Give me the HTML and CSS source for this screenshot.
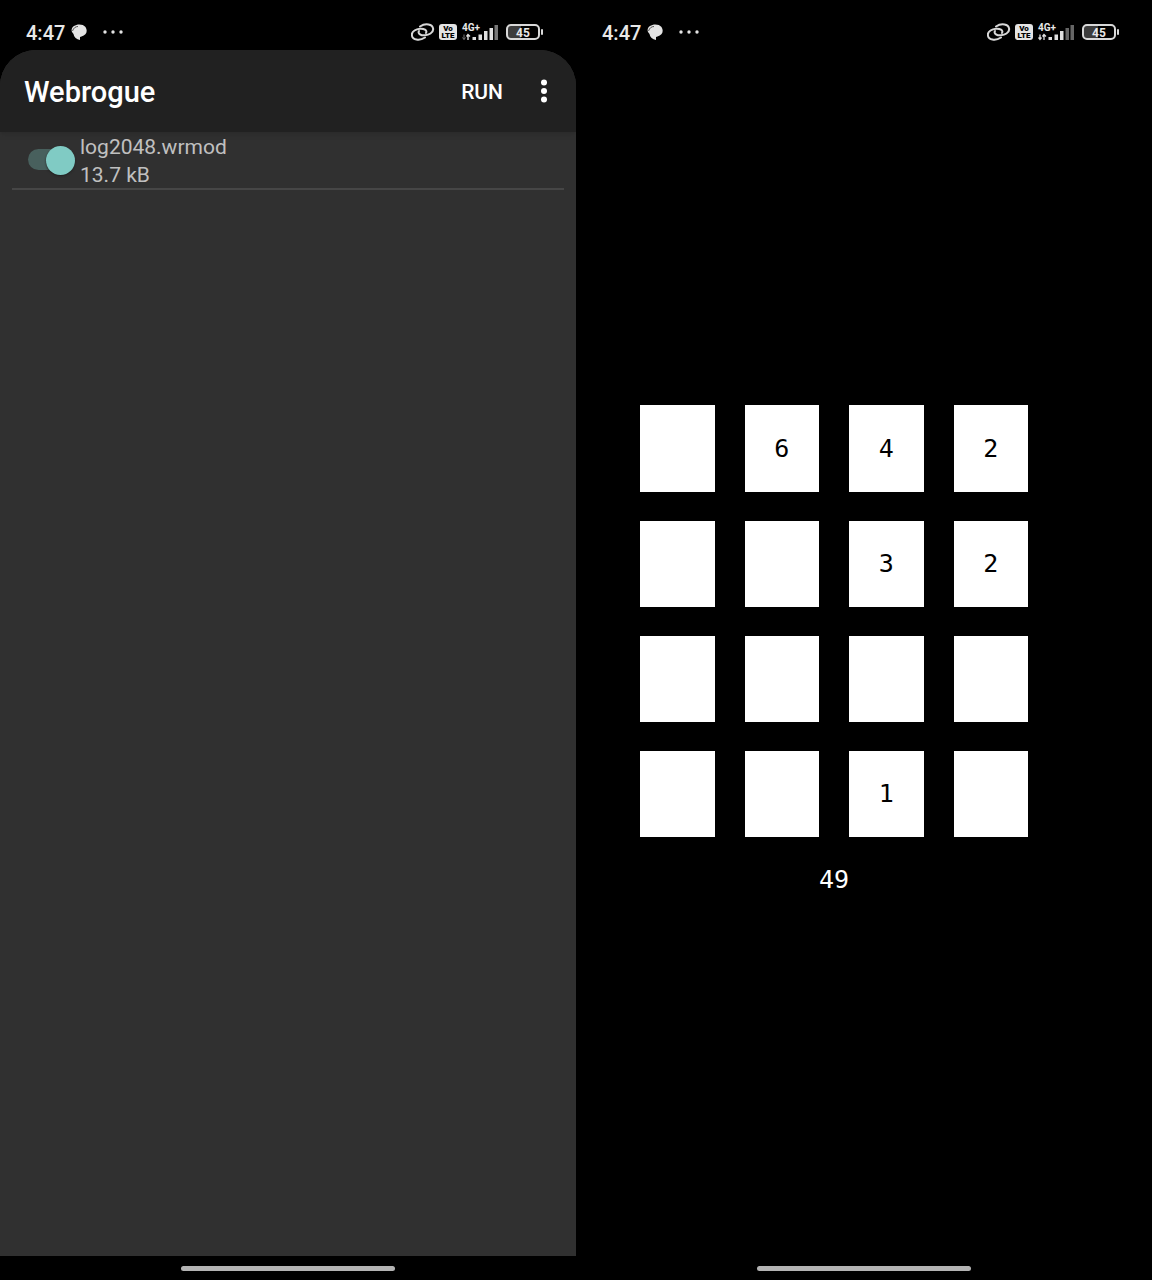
FILE: index.html
```html
<!DOCTYPE html>
<html lang="en">
<head>
<meta charset="utf-8">
<meta name="viewport" content="width=device-width, initial-scale=1">
<title>Webrogue</title>
<link rel="stylesheet" href="styles.css">
</head>
<body>
<main class="screens">
  <section class="phone" aria-label="Module list">
    <div class="status">
      <span class="clock">4:47</span>
      <svg class="chat" width="16" height="16" viewBox="0 0 16 16"><path d="M3 2C6-.2 12-.2 14.500 3c2.500 4 1 8.500-4 9.500L9 13v3C5.500 15.500 3 13 2.500 10L1 8C0 5.500 1 3.500 3 2z" fill="#e4e4e4"/><path d="M1.500 7C2.500 4 4.500 2.500 7 2.500" fill="none" stroke="#555"/></svg>
      <svg class="more" width="20" height="4" viewBox="0 0 20 4" fill="#e4e4e4"><circle cx="2" cy="2" r="1.700"/><circle cx="10" cy="2" r="1.700"/><circle cx="18" cy="2" r="1.700"/></svg>
      <div class="indicators">
        <svg class="link" width="24" height="18" viewBox="0 0 24 18" fill="none" stroke="#d8d8d8" stroke-width="2" stroke-linecap="round"><path d="M9 3.500C12 1.500 15 1 17.500 1.500C23 2.500 23.500 8 19.500 10.500C16.500 12.500 11.500 13 9 11.300C7.500 10.300 7.300 9 8 8"/><path d="M14 14.500C11 16.500 8 17 5.500 16.500C0 15.500-.5 10 3.500 7.500C6.500 5.500 11.500 5 14 6.700C15.500 7.700 15.700 9 15 10"/></svg>
        <span class="volte"><span>Vo</span><span>LTE</span></span>
        <span class="network">
          <span class="net-label">4G+</span>
          <svg width="36" height="18" viewBox="0 0 36 18" fill="#e0e0e0"><path d="M2 11.500v5M.5 14.500l1.500 2 1.500-2" fill="none" stroke="#777"/><path d="M6 17v-5.500M4.500 13.500l1.500-2 2 2" fill="none" stroke="#e0e0e0" stroke-width="1.400"/><path d="M10.500 14h3.500v3h-3.500zM16.500 11.500h3.500v5.500h-3.500zM22 8h3.500v9h-3.500zM27.500 5h3.500v12h-3.500z"/><path d="M32.500 2h3.500v15h-3.500z" fill="#777"/></svg>
        </span>
        <span class="battery"><span class="cell">45</span></span>
      </div>
    </div>
    <div class="app">
      <header class="toolbar">
        <h1>Webrogue</h1>
        <button class="run" type="button">RUN</button>
        <button class="overflow" type="button" aria-label="More options"><svg width="8" height="24" viewBox="0 0 8 24" fill="#fff"><circle cx="4" cy="3.500" r="3"/><circle cx="4" cy="12" r="3"/><circle cx="4" cy="20.500" r="3"/></svg></button>
      </header>
      <div class="module">
        <input class="switch" id="module-log2048" type="checkbox" role="switch" checked>
        <label for="module-log2048"><span>log2048.wrmod</span><span>13.7 kB</span></label>
      </div>
    </div>
    <div class="navigation"><span class="handle"></span></div>
  </section>

  <section class="phone" aria-label="Game">
    <div class="status">
      <span class="clock">4:47</span>
      <svg class="chat" width="16" height="16" viewBox="0 0 16 16"><path d="M3 2C6-.2 12-.2 14.500 3c2.500 4 1 8.500-4 9.500L9 13v3C5.500 15.500 3 13 2.500 10L1 8C0 5.500 1 3.500 3 2z" fill="#e4e4e4"/><path d="M1.500 7C2.500 4 4.500 2.500 7 2.500" fill="none" stroke="#555"/></svg>
      <svg class="more" width="20" height="4" viewBox="0 0 20 4" fill="#e4e4e4"><circle cx="2" cy="2" r="1.700"/><circle cx="10" cy="2" r="1.700"/><circle cx="18" cy="2" r="1.700"/></svg>
      <div class="indicators">
        <svg class="link" width="24" height="18" viewBox="0 0 24 18" fill="none" stroke="#d8d8d8" stroke-width="2" stroke-linecap="round"><path d="M9 3.500C12 1.500 15 1 17.500 1.500C23 2.500 23.500 8 19.500 10.500C16.500 12.500 11.500 13 9 11.300C7.500 10.300 7.300 9 8 8"/><path d="M14 14.500C11 16.500 8 17 5.500 16.500C0 15.500-.5 10 3.500 7.500C6.500 5.500 11.500 5 14 6.700C15.500 7.700 15.700 9 15 10"/></svg>
        <span class="volte"><span>Vo</span><span>LTE</span></span>
        <span class="network">
          <span class="net-label">4G+</span>
          <svg width="36" height="18" viewBox="0 0 36 18" fill="#e0e0e0"><path d="M2 11.500v5M.5 14.500l1.500 2 1.500-2M6 17v-5.500M4.500 13.500l1.500-2 2 2" fill="none" stroke="#e0e0e0" stroke-width="1.300"/><path d="M10.500 14h3.500v3h-3.500zM16.500 11.500h3.500v5.500h-3.500zM22 8h3.500v9h-3.500z"/><path d="M27.500 5h3.500v12h-3.500zM32.500 2h3.500v15h-3.500z" fill="#666"/></svg>
        </span>
        <span class="battery"><span class="cell">45</span></span>
      </div>
    </div>
    <div class="game">
      <div class="board">
        <div class="tile"></div><div class="tile">6</div><div class="tile">4</div><div class="tile">2</div>
        <div class="tile"></div><div class="tile"></div><div class="tile">3</div><div class="tile">2</div>
        <div class="tile"></div><div class="tile"></div><div class="tile"></div><div class="tile"></div>
        <div class="tile"></div><div class="tile"></div><div class="tile">1</div><div class="tile"></div>
        <output class="score">49</output>
      </div>
    </div>
    <div class="navigation"><span class="handle"></span></div>
  </section>
</main>
</body>
</html>
```
FILE: styles.css
```css
* { box-sizing: border-box; }

body {
  margin: 0;
  background: #000;
  color: #fff;
  font-family: Roboto, "Liberation Sans", sans-serif;
}

.screens {
  display: grid;
  grid-template-columns: 1fr 1fr;
  min-height: 100vh;
}

.phone {
  display: flex;
  flex-direction: column;
  min-width: 0;
}

/* Status bar */
.status {
  display: flex;
  align-items: center;
  height: 50px;
  padding: 14px 33px 0 26px;
  color: #e8e8e8;
}

.clock {
  padding-top: 2px;
  font-size: 20px;
  font-weight: 500;
  line-height: 24px;
}

.chat { margin-left: 6px; }
.more { margin-left: 16px; }

.indicators {
  display: flex;
  align-items: center;
  margin-left: auto;
}

.volte {
  display: flex;
  flex-direction: column;
  align-items: center;
  justify-content: center;
  width: 18px;
  height: 16px;
  margin-left: 4px;
  border-radius: 3px;
  background: #e4e4e4;
  color: #000;
  font-size: 8px;
  font-weight: 900;
  line-height: 7px;
}

.network {
  position: relative;
  height: 18px;
  margin: 0 8px 0 5px;
}

.network svg { display: block; }

.net-label {
  position: absolute;
  top: 0;
  left: 0;
  font-size: 10px;
  font-weight: 700;
  line-height: 10px;
}

.battery {
  display: flex;
  align-items: center;
}

.battery::after {
  width: 2px;
  height: 6px;
  margin-left: 1px;
  border-radius: 1px;
  background: #d8d8d8;
  content: "";
}

.cell {
  width: 34px;
  height: 16px;
  border: 2px solid #d8d8d8;
  border-radius: 5px;
  background: linear-gradient(to right, #3c3c3c 45%, #000 45%);
  font-size: 12px;
  font-weight: 700;
  line-height: 14px;
  text-align: center;
}

/* Module list */
.app {
  flex: 1;
  overflow: hidden;
  border-radius: 36px 36px 0 0;
  background: #303030;
}

.toolbar {
  display: flex;
  align-items: center;
  height: 82px;
  padding: 0 16px 0 24px;
  background: #212121;
  box-shadow: 0 1px 5px #282828;
}

h1 {
  margin: 0;
  padding-top: 2px;
  font-size: 29px;
  font-weight: 500;
  line-height: 36px;
}

button {
  border: 0;
  background: none;
  color: #fff;
  font-family: inherit;
}

.run {
  margin-left: auto;
  padding: 10px 12px 8px;
  font-size: 21px;
  font-weight: 500;
  line-height: 24px;
}

.overflow {
  display: flex;
  justify-content: center;
  width: 32px;
  margin-left: 13px;
  padding: 0;
}

.module {
  display: flex;
  align-items: center;
  height: 58px;
  margin: 0 12px;
  padding-left: 16px;
  border-bottom: 2px solid #464646;
  color: #c0c0c0;
  font-size: 21px;
  line-height: 28px;
}

.module label {
  display: flex;
  flex-direction: column;
  margin-left: 5px;
  padding-top: 2px;
}

.switch {
  position: relative;
  display: flex;
  align-items: center;
  justify-content: flex-end;
  width: 47px;
  height: 30px;
  margin: 0;
  appearance: none;
}

.switch::before {
  position: absolute;
  top: 4px;
  left: 0;
  width: 42px;
  height: 21px;
  border-radius: 11px;
  background: #48605d;
  content: "";
}

.switch::after {
  position: relative;
  width: 29px;
  height: 29px;
  border-radius: 50%;
  background: #80cbc4;
  box-shadow: 0 1px 2px #202020;
  content: "";
}

/* Game */
.game {
  flex: 1;
  padding: 355px 124px 0 64px;
  font-family: "DejaVu Sans Mono", monospace;
  font-size: 25px;
  line-height: 28px;
}

.board {
  display: grid;
  grid-template-columns: repeat(4, 1fr);
  grid-template-rows: 87px 86px 86px 86px 28px;
  gap: 29px 30px;
}

.tile {
  display: flex;
  align-items: center;
  justify-content: center;
  background: #fff;
  color: #000;
}

.score {
  grid-column: 1 / -1;
  text-align: center;
}

/* Gesture bar */
.navigation {
  display: flex;
  justify-content: center;
  height: 24px;
  padding-top: 10px;
}

.handle {
  width: 37%;
  height: 5px;
  border-radius: 3px;
  background: #b3b3b3;
}
```
